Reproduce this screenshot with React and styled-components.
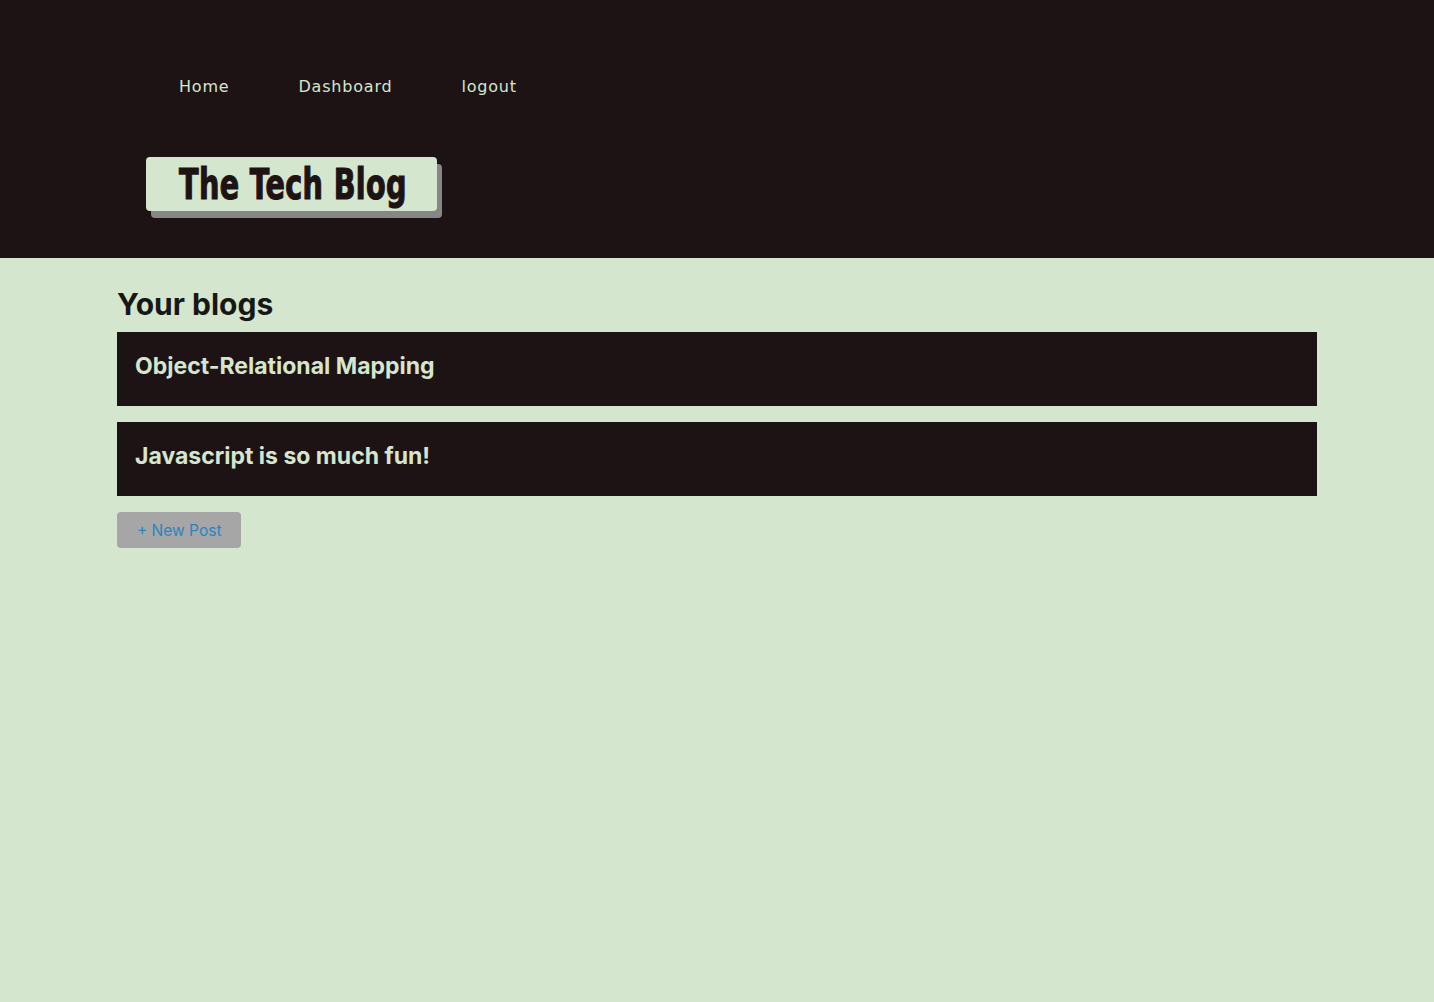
import React from "react"
import styled, { createGlobalStyle } from "styled-components"

const GlobalStyle = createGlobalStyle`
  body {
    margin: 0;
    background-color: #d4e6ce;
    font-family: Inter, "Liberation Sans", sans-serif;
  }
`

const Header = styled.header`
  background-color: #1e1314;
  height: 258px;
  box-sizing: border-box;
  padding: 75px 0 0 146px;
`

const Nav = styled.nav`
  display: flex;
  gap: 69px;
  padding-left: 33px;
  height: 82px;
`

const NavLink = styled.a`
  color: #d4e6ce;
  font-family: "DejaVu Sans", Verdana, sans-serif;
  font-size: 16px;
  letter-spacing: 0.8px;
  line-height: 24px;
  text-decoration: none;
`

const Title = styled.h1`
  width: 291px;
  box-sizing: border-box;
  margin: 0;
  background-color: #d4e6ce;
  color: #1e1314;
  border-radius: 4px;
  box-shadow: 5px 7px 0 #878787;
  padding-left: 33px;
  height: 54px;
  line-height: 54px;
  font-family: "DejaVu Sans Condensed", "DejaVu Sans", sans-serif;
  font-weight: 700;
  font-size: 43px;
  white-space: nowrap;
  -webkit-text-stroke: 1.2px #1e1314;
`

const TitleText = styled.span`
  display: inline-block;
  transform: scaleX(0.74);
  transform-origin: left center;
  letter-spacing: 0.5px;
`

const Main = styled.main`
  width: 1200px;
  margin: 0 auto;
  padding-top: 26px;
`

const Heading = styled.h2`
  margin: 0 0 8px;
  font-size: 30px;
  line-height: 40px;
  font-weight: 700;
  color: #171717;
`

const PostList = styled.div`
  display: flex;
  flex-direction: column;
  gap: 16px;
`

const PostCard = styled.div`
  background-color: #1e1314;
  height: 74px;
  box-sizing: border-box;
  padding: 19px 18px;
`

const PostTitle = styled.h3`
  margin: 0;
  color: #d4e6ce;
  font-size: 23px;
  line-height: 30px;
  font-weight: 700;
`

const NewPostButton = styled.button`
  margin-top: 16px;
  background-color: #a6a6a6;
  color: #2a84c0;
  border: none;
  border-radius: 4px;
  height: 36px;
  padding: 0 20px;
  font-family: Inter, "Liberation Sans", sans-serif;
  font-size: 15.5px;
  cursor: pointer;
`

const posts = ["Object-Relational Mapping", "Javascript is so much fun!"]

const App = () => {
  return (
    <>
      <GlobalStyle />
      <Header>
        <Nav>
          <NavLink href="#">Home</NavLink>
          <NavLink href="#">Dashboard</NavLink>
          <NavLink href="#">logout</NavLink>
        </Nav>
        <Title>
          <TitleText>The Tech Blog</TitleText>
        </Title>
      </Header>
      <Main>
        <Heading>Your blogs</Heading>
        <PostList>
          {posts.map(title => (
            <PostCard key={title}>
              <PostTitle>{title}</PostTitle>
            </PostCard>
          ))}
        </PostList>
        <NewPostButton>+ New Post</NewPostButton>
      </Main>
    </>
  )
}

export default App
